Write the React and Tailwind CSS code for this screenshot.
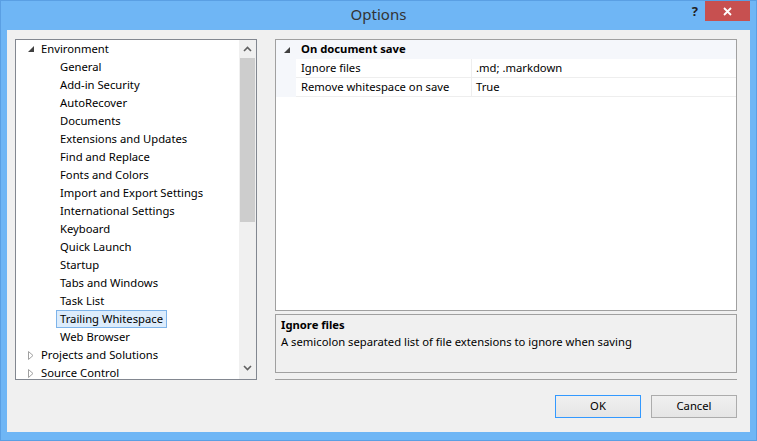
import React from "react";

const children = [
  "General",
  "Add-in Security",
  "AutoRecover",
  "Documents",
  "Extensions and Updates",
  "Find and Replace",
  "Fonts and Colors",
  "Import and Export Settings",
  "International Settings",
  "Keyboard",
  "Quick Launch",
  "Startup",
  "Tabs and Windows",
  "Task List",
  "Trailing Whitespace",
  "Web Browser",
];

const Expanded = () => (
  <svg width="6" height="6" viewBox="0 0 6 6" className="shrink-0">
    <path d="M6 0 L6 6 L0 6 Z" fill="#404040" />
  </svg>
);

const Collapsed = () => (
  <svg width="6" height="9" viewBox="0 0 6 9" className="shrink-0">
    <path d="M0.5 0.5 L5 4.5 L0.5 8.5 Z" fill="none" stroke="#a0a0a0" strokeWidth="1" />
  </svg>
);

const Tree = () => (
  <div className="flex h-[341px] w-[242px] border border-[#828790] bg-white">
    <div className="flex-1 overflow-hidden">
      <div className="flex h-[18px] items-center pl-3">
        <Expanded />
        <span className="pl-[7px]">Environment</span>
      </div>
      {children.map((c) => (
        <div key={c} className="flex h-[18px] items-center pl-[40px]">
          {c === "Trailing Whitespace" ? (
            <span className="border border-[#7eb4ea] bg-[#dcecfc] px-[3px] leading-[16px]">{c}</span>
          ) : (
            <span className="px-[4px]">{c}</span>
          )}
        </div>
      ))}
      <div className="flex h-[18px] items-center pl-[12px]">
        <Collapsed />
        <span className="pl-[7px]">Projects and Solutions</span>
      </div>
      <div className="flex h-[18px] items-center pl-[12px]">
        <Collapsed />
        <span className="pl-[7px]">Source Control</span>
      </div>
    </div>
    <div className="flex w-[17px] flex-col bg-[#f0f0f0]">
      <div className="flex h-[18px] items-center justify-center">
        <svg width="9" height="6" viewBox="0 0 9 6">
          <path d="M1 5 L4.5 1.5 L8 5" fill="none" stroke="#606060" strokeWidth="1.6" />
        </svg>
      </div>
      <div className="mx-[1px] h-[164px] bg-[#cdcdcd]" />
      <div className="flex-1" />
      <div className="flex h-[18px] items-center justify-center pb-1">
        <svg width="9" height="6" viewBox="0 0 9 6">
          <path d="M1 1 L4.5 4.5 L8 1" fill="none" stroke="#606060" strokeWidth="1.6" />
        </svg>
      </div>
    </div>
  </div>
);

const PropRow = ({ name, value }) => (
  <div className="flex h-[19px]">
    <div className="w-[20px] bg-[#f5f7fb]" />
    <div className="flex w-[176px] items-center border-b border-r border-[#eeeeee] pl-[5px]">{name}</div>
    <div className="flex flex-1 items-center border-b border-[#eeeeee] pl-[4px]">{value}</div>
  </div>
);

const Grid = () => (
  <div className="flex h-[272px] flex-col border border-[#a0a0a0] bg-white">
    <div className="flex h-[19px] items-center bg-[#f5f7fb]">
      <div className="flex w-[20px] justify-center pl-[1px]">
        <Expanded />
      </div>
      <span className="pl-[5px] font-bold">On document save</span>
    </div>
    <PropRow name="Ignore files" value=".md; .markdown" />
    <PropRow name="Remove whitespace on save" value="True" />
  </div>
);

export default function App() {
  return (
    <div
      className="h-[441px] w-[757px] overflow-hidden bg-[#6fb6f5] text-[11.25px] text-black"
      style={{ fontFamily: '"Segoe UI", "Noto Sans", sans-serif' }}
    >
      <div className="flex h-full w-full flex-col border border-[#5a9fe3]">
        <div className="relative flex h-[29px] items-center justify-center">
          <span className="pb-[3px] text-[15px] text-[#333333]">Options</span>
          <span className="absolute right-[58px] top-[1px] text-[13px] font-bold text-[#222222]">?</span>
          <div className="absolute right-[6px] top-0 flex h-[20px] w-[45px] items-center justify-center bg-[#c75050]">
            <svg width="9" height="9" viewBox="0 0 9 9">
              <path d="M1 1 L8 8 M8 1 L1 8" stroke="white" strokeWidth="1.8" />
            </svg>
          </div>
        </div>
        <div className="mx-[6px] mb-[8px] flex flex-1 flex-col bg-[#f0f0f0] pl-[8px] pr-[13px] pt-[9px]">
          <div className="flex gap-[18px]">
            <Tree />
            <div className="flex flex-1 flex-col">
              <Grid />
              <div className="mt-[3px] h-[59px] border border-[#a0a0a0] px-[5px] pt-[2px]">
                <div className="font-bold">Ignore files</div>
                <div>A semicolon separated list of file extensions to ignore when saving</div>
              </div>
              <div className="mt-[6px] h-[2px] border-t border-[#a0a0a0] border-b-white" />
            </div>
          </div>
          <div className="mt-[14px] flex justify-end gap-[10px]">
            <button className="flex h-[23px] w-[86px] items-center justify-center border border-[#3399ff] bg-gradient-to-b from-[#f0f0f0] to-[#e5e5e5]">
              OK
            </button>
            <button className="flex h-[23px] w-[86px] items-center justify-center border border-[#acacac] bg-gradient-to-b from-[#f0f0f0] to-[#e5e5e5]">
              Cancel
            </button>
          </div>
        </div>
      </div>
    </div>
  );
}
